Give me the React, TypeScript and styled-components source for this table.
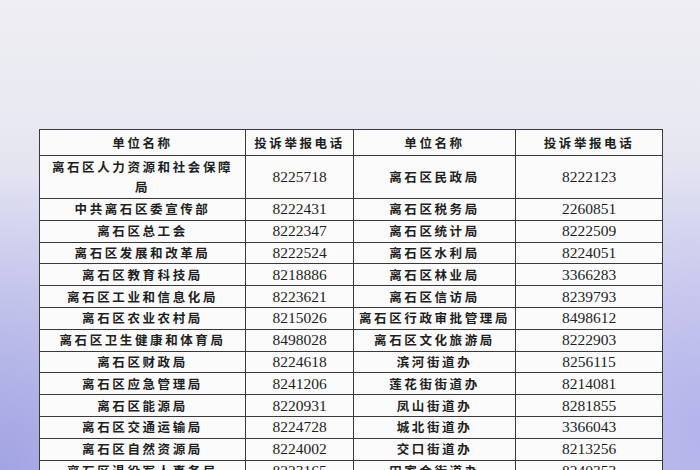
import React from "react";
import styled, { createGlobalStyle } from "styled-components";

const Global = createGlobalStyle`
  html, body { margin: 0; padding: 0; }
  body { width: 700px; height: 470px; overflow: hidden; }
`;

const Page = styled.div`
  width: 700px;
  height: 470px;
  overflow: hidden;
  box-sizing: border-box;
  padding: 129px 0 0 39px;
  background:
    radial-gradient(ellipse 260px 300px at 0% 100%, rgba(150, 152, 225, 0.75), rgba(150, 152, 225, 0) 100%),
    radial-gradient(ellipse 200px 260px at 100% 90%, rgba(170, 170, 235, 0.7), rgba(170, 170, 235, 0) 100%),
    linear-gradient(180deg, #eeeef3 0%, #e9e9f2 25%, #d9d9f0 60%, #c6c6ec 100%);
`;

const Table = styled.table`
  border-collapse: collapse;
  background: #fbfbfb;
  table-layout: fixed;
  width: 623px;
  color: #1e1e1e;
`;

const Cell = styled.td<{ $head?: boolean; $num?: boolean; $tall?: boolean }>`
  border: 1.5px solid #3a3a3a;
  padding: 0 4px;
  text-align: center;
  vertical-align: middle;
  white-space: nowrap;
  height: ${(p) => (p.$head ? "25px" : p.$tall ? "42px" : "20.8px")};
  font-family: ${(p) =>
    p.$num
      ? '"Liberation Serif", "Times New Roman", serif'
      : '"Noto Sans CJK SC", "Noto Sans CJK JP", sans-serif'};
  font-size: ${(p) => (p.$num ? "15.5px" : "12.5px")};
  font-weight: ${(p) => (p.$num ? 400 : 700)};
  letter-spacing: ${(p) => (p.$num ? "0" : "2.6px")};
  line-height: ${(p) => (p.$tall ? "20px" : "18px")};
`;

type Row = [React.ReactNode, string, string, string];

const rows: Row[] = [
  ["中共离石区委宣传部", "8222431", "离石区税务局", "2260851"],
  ["离石区总工会", "8222347", "离石区统计局", "8222509"],
  ["离石区发展和改革局", "8222524", "离石区水利局", "8224051"],
  ["离石区教育科技局", "8218886", "离石区林业局", "3366283"],
  ["离石区工业和信息化局", "8223621", "离石区信访局", "8239793"],
  ["离石区农业农村局", "8215026", "离石区行政审批管理局", "8498612"],
  ["离石区卫生健康和体育局", "8498028", "离石区文化旅游局", "8222903"],
  ["离石区财政局", "8224618", "滨河街道办", "8256115"],
  ["离石区应急管理局", "8241206", "莲花街街道办", "8214081"],
  ["离石区能源局", "8220931", "凤山街道办", "8281855"],
  ["离石区交通运输局", "8224728", "城北街道办", "3366043"],
  ["离石区自然资源局", "8224002", "交口街道办", "8213256"],
  ["离石区退役军人事务局", "8223165", "田家会街道办", "8240353"],
];

export default function App() {
  return (
    <>
      <Global />
      <Page>
        <Table>
          <colgroup>
            <col style={{ width: 206 }} />
            <col style={{ width: 108 }} />
            <col style={{ width: 162 }} />
            <col style={{ width: 147 }} />
          </colgroup>
          <tbody>
            <tr>
              <Cell $head>单位名称</Cell>
              <Cell $head>投诉举报电话</Cell>
              <Cell $head>单位名称</Cell>
              <Cell $head>投诉举报电话</Cell>
            </tr>
            <tr>
              <Cell $tall>
                离石区人力资源和社会保障
                <br />局
              </Cell>
              <Cell $tall $num>8225718</Cell>
              <Cell $tall>离石区民政局</Cell>
              <Cell $tall $num>8222123</Cell>
            </tr>
            {rows.map((r, i) => (
              <tr key={i}>
                <Cell>{r[0]}</Cell>
                <Cell $num>{r[1]}</Cell>
                <Cell>{r[2]}</Cell>
                <Cell $num>{r[3]}</Cell>
              </tr>
            ))}
          </tbody>
        </Table>
      </Page>
    </>
  );
}
